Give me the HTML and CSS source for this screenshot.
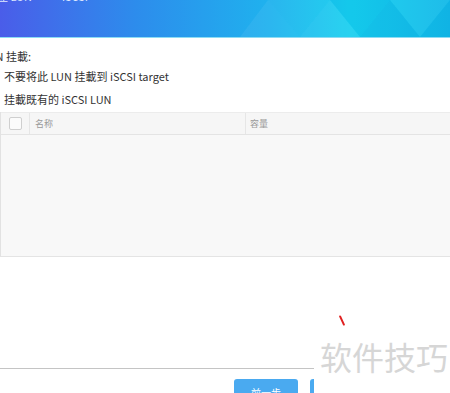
FILE: index.html
```html
<!DOCTYPE html>
<html>
<head>
<meta charset="utf-8">
<link rel="stylesheet" href="styles.css">
</head>
<body>
<div class="page">
  <header class="header">
    <div class="header-title"><span>建立 LUN</span><span class="sub">iSCSI</span></div>
    <svg class="header-art" width="450" height="37" viewBox="0 0 450 37" preserveAspectRatio="none">
      <polygon points="240,37 268,0 300,37" fill="#ffffff" opacity="0.06"/>
      <polygon points="268,0 300,37 330,0" fill="#ffffff" opacity="0.05"/>
      <polygon points="300,37 330,0 360,37" fill="#ffffff" opacity="0.08"/>
      <polygon points="330,0 360,37 390,0" fill="#0a8fd0" opacity="0.10"/>
      <polygon points="360,37 390,0 420,37" fill="#0a8fd0" opacity="0.16"/>
      <polygon points="390,0 420,37 450,0" fill="#ffffff" opacity="0.05"/>
      <polygon points="420,37 450,0 450,37" fill="#0a8fd0" opacity="0.12"/>
    </svg>
  </header>

  <main class="content">
    <div class="label">LUN 挂載:</div>
    <div class="option first">不要将此 LUN 挂載到 iSCSI target</div>
    <div class="option">挂載既有的 iSCSI LUN</div>

    <div class="table">
      <div class="thead">
        <div class="cell check"><span class="box"></span></div>
        <div class="cell name">名称</div>
        <div class="cell size">容量</div>
      </div>
      <div class="tbody"></div>
    </div>
  </main>

  <footer class="footer">
    <div class="btns">
      <button class="btn">前一步</button>
      <button class="btn">下一步</button>
    </div>
  </footer>

  <div class="watermark"><span class="mark"></span>软件技巧</div>
</div>
</body>
</html>
```
FILE: styles.css
```css
html, body {
  margin: 0;
  padding: 0;
  background: #ffffff;
}
body {
  font-family: "Noto Sans CJK SC", "Noto Sans", sans-serif;
  color: #333333;
  overflow: hidden;
}
.page {
  position: relative;
  width: 450px;
  height: 393px;
  overflow: hidden;
}
.header {
  position: relative;
  height: 37px;
  background: linear-gradient(90deg, #4a5de9 0%, #2d8cec 30%, #1fb2ee 60%, #16cfef 78%, #12b9e8 100%);
  border-bottom: 1px solid #8ddcf3;
  overflow: hidden;
}
.header-art {
  position: absolute;
  left: 0;
  top: 0;
}
.header-title {
  display: flex;
  gap: 30px;
  margin-top: -10px;
  margin-left: -14px;
  color: #dfe8ff;
  font-size: 11px;
  line-height: 12px;
}
.content {
  padding: 11px 0 0 0;
  font-size: 11px;
}
.label {
  margin-left: -18px;
  line-height: 14px;
  height: 14px;
}
.option {
  margin-left: 4px;
  margin-top: 9px;
  line-height: 14px;
  height: 14px;
}
.option.first {
  margin-top: 6px;
}
.table {
  margin-top: 6px;
  width: 451px;
  border-left: 1px solid #e2e2e2;
  border-bottom: 1px solid #e4e4e4;
}
.thead {
  display: flex;
  height: 21px;
  background: #f6f6f6;
  border-top: 1px solid #ececec;
  border-bottom: 1px solid #e4e4e4;
}
.cell {
  display: flex;
  align-items: center;
  font-size: 9px;
  color: #9a9a9a;
}
.check {
  width: 28px;
  justify-content: center;
  border-right: 1px solid #e6e6e6;
}
.box {
  width: 11px;
  height: 11px;
  border: 1px solid #cfcfcf;
  border-radius: 2px;
  background: #fbfbfb;
}
.name {
  width: 210px;
  padding-left: 5px;
  border-right: 1px solid #e6e6e6;
}
.size {
  padding-left: 4px;
}
.tbody {
  height: 121px;
  background: #f8f8f8;
}
.footer {
  margin-top: 111px;
  border-top: 1px solid #c4c4c4;
}
.btns {
  display: flex;
  gap: 12px;
  margin-left: 234px;
  margin-top: 10px;
}
.btn {
  flex: none;
  width: 64px;
  height: 28px;
  border: none;
  border-radius: 3px;
  background: #4aaaf0;
  color: #ffffff;
  font-family: "Noto Sans CJK SC", sans-serif;
  font-size: 10px;
  padding: 0;
  line-height: 28px;
}
.watermark {
  position: absolute;
  left: 314px;
  top: 308px;
  width: 136px;
  height: 85px;
  box-sizing: border-box;
  padding-top: 26px;
  padding-left: 6px;
  font-family: "Noto Sans CJK SC", sans-serif;
  font-size: 32px;
  line-height: 44px;
  color: #d6d6d6;
  background: #ffffff;
}
.mark {
  position: absolute;
  left: 27px;
  top: 7px;
  width: 2px;
  height: 11px;
  background: #e02020;
  transform: rotate(-25deg);
  border-radius: 1px;
}
```
